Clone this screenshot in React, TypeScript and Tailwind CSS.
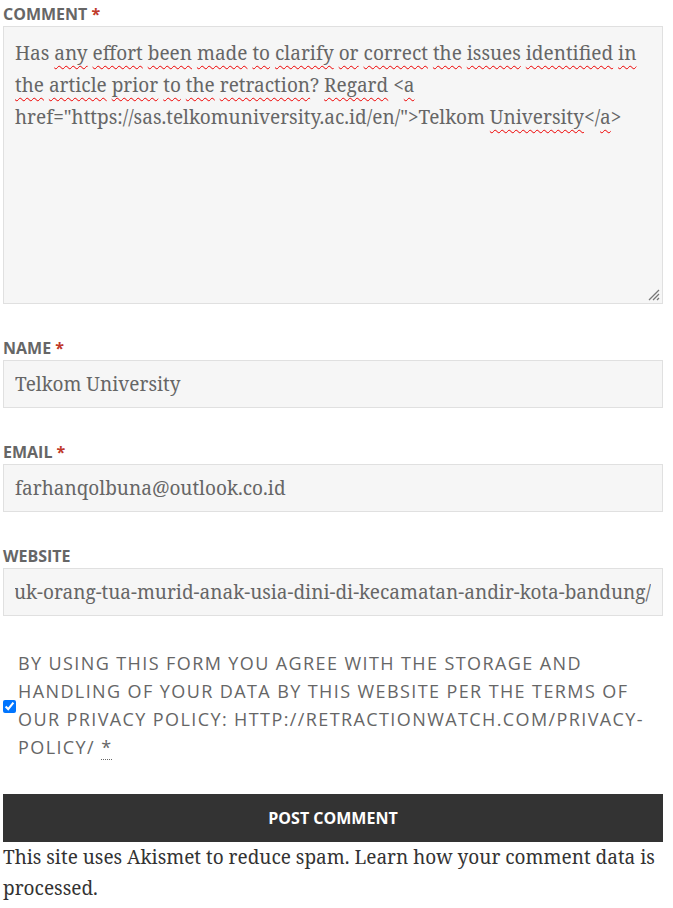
import React from "react";

const serif = { fontFamily: '"Noto Serif", "DejaVu Serif", "Liberation Serif", serif' };
const sans = { fontFamily: '"Open Sans", "Noto Sans", sans-serif' };

function W({ children }: { children: React.ReactNode }) {
  return (
    <span className="underline decoration-wavy decoration-[#e00] decoration-1 underline-offset-[5px]">
      {children}
    </span>
  );
}

function Label({ text, req }: { text: string; req?: boolean }) {
  return (
    <div className="text-[16px] font-bold uppercase leading-[22px] text-[#666]" style={sans}>
      {text}
      {req && <span className="text-[#c0392b]"> *</span>}
    </div>
  );
}

function Field({ value, right }: { value: string; right?: boolean }) {
  return (
    <div
      className="mt-[1px] flex h-[48px] items-center border border-[#e0e0e0] bg-[#f6f6f6] px-[11px] text-[19px] text-[#666]"
      style={serif}
    >
      <div className={`flex min-w-0 flex-1 overflow-hidden whitespace-nowrap ${right ? "justify-end" : ""}`}>
        <span className="shrink-0">{value}</span>
      </div>
    </div>
  );
}

export default function App() {
  return (
    <div className="w-[673px] bg-white pl-[3px] pr-[10px]">
      <div className="pt-[3px]">
        <Label text="Comment" req />
        <div
          className="relative mt-[1px] h-[278px] border border-[#e0e0e0] bg-[#f6f6f6] px-[11px] pt-[10px] text-[19px] leading-[32px] text-[#666]"
          style={serif}
        >
          Has <W>any</W> <W>effort</W> <W>been</W> <W>made</W> <W>to</W> <W>clarify</W> <W>or</W>{" "}
          <W>correct</W> <W>the</W> <W>issues</W> <W>identified</W> <W>in</W> <W>the</W> <W>article</W>{" "}
          <W>prior</W> <W>to</W> <W>the</W> <W>retraction</W>? <W>Regard</W> &lt;<W>a</W>
          <br />
          href="https://sas.telkomuniversity.ac.id/en/"&gt;Telkom <W>University</W>&lt;/<W>a</W>&gt;
          <svg className="absolute bottom-[2px] right-[2px]" width="14" height="14" viewBox="0 0 14 14">
            <path d="M13 3 L3 13 M13 7 L7 13 M13 11 L11 13" stroke="#777" strokeWidth="1.3" />
          </svg>
        </div>
      </div>

      <div className="mt-[33px]">
        <Label text="Name" req />
        <Field value="Telkom University" />
      </div>

      <div className="mt-[33px]">
        <Label text="Email" req />
        <Field value="farhanqolbuna@outlook.co.id" />
      </div>

      <div className="mt-[33px]">
        <Label text="Website" />
        <Field
          right
          value="https://sas.telkomuniversity.ac.id/pengaruh-media-edukasi-untuk-orang-tua-murid-anak-usia-dini-di-kecamatan-andir-kota-bandung/"
        />
      </div>

      <div className="mt-[33px] flex items-center">
        <input type="checkbox" defaultChecked className="m-0 mt-[2px] h-[13px] w-[13px] shrink-0 accent-[#0075ff]" />
        <div
          className="w-[629px] shrink-0 pl-[2px] text-[18px] uppercase leading-[28px] tracking-[1.4px] text-[#666]"
          style={sans}
        >
          By using this form you agree with the storage and handling of your data by this website per the terms of our
          privacy policy: http://retractionwatch.com/privacy-policy/{" "}
          <span className="border-b border-dotted border-[#666]">*</span>
        </div>
      </div>

      <button
        className="mt-[33px] flex h-[48px] w-full items-center justify-center bg-[#333] text-[16px] font-bold uppercase text-white"
        style={sans}
      >
        Post Comment
      </button>

      <p className="text-[19px] leading-[31px] text-[#333]" style={serif}>
        This site uses Akismet to reduce spam. Learn how your comment data is processed.
      </p>
    </div>
  );
}
